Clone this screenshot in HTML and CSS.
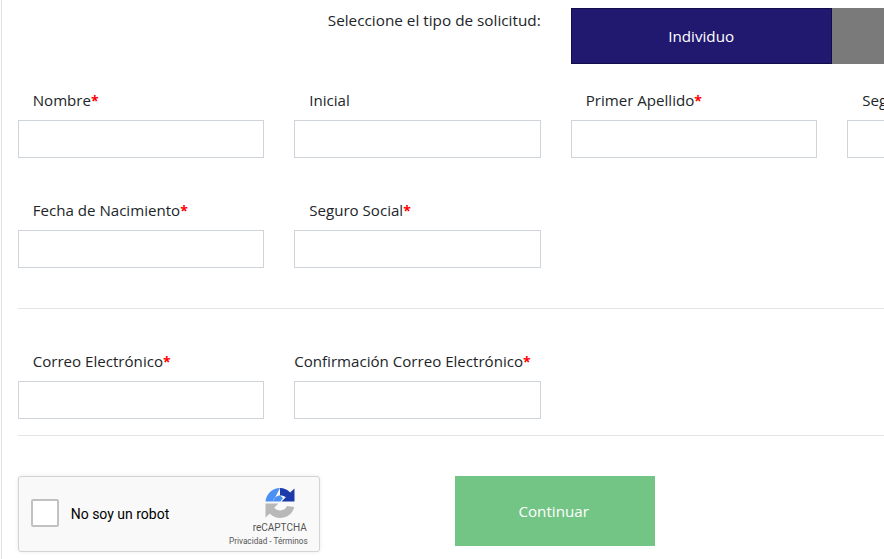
FILE: index.html
```html
<!DOCTYPE html>
<html lang="es">
<head>
  <meta charset="UTF-8" />
  <meta name="viewport" content="width=device-width, initial-scale=1.0"/>
  <title>Solicitud</title>
  <link rel="stylesheet" href="styles.css">
</head>
<body>
  <div class="form-container">
    <div class="type-row">
      <span class="type-label">Seleccione el tipo de solicitud:</span>
      <div class="type-buttons">
        <button class="type-btn active">Individuo</button>
        <button class="type-btn"></button>
      </div>
    </div>

    <div class="field-row first">
      <div class="field">
        <label>Nombre<span class="req">*</span></label>
        <input type="text">
      </div>
      <div class="field">
        <label>Inicial</label>
        <input type="text">
      </div>
      <div class="field">
        <label>Primer Apellido<span class="req">*</span></label>
        <input type="text">
      </div>
      <div class="field">
        <label>Segundo Apellido</label>
        <input type="text">
      </div>
    </div>

    <div class="field-row second">
      <div class="field">
        <label>Fecha de Nacimiento<span class="req">*</span></label>
        <input type="text">
      </div>
      <div class="field">
        <label>Seguro Social<span class="req">*</span></label>
        <input type="text">
      </div>
    </div>

    <hr class="divider">

    <div class="field-row third">
      <div class="field">
        <label>Correo Electrónico<span class="req">*</span></label>
        <input type="text">
      </div>
      <div class="field">
        <label class="flush">Confirmación Correo Electrónico<span class="req">*</span></label>
        <input type="text">
      </div>
    </div>

    <hr class="divider bottom">

    <div class="submit-row">
      <div class="captcha">
        <span class="captcha-check"></span>
        <span class="captcha-text">No soy un robot</span>
        <div class="captcha-brand">
          <svg class="captcha-logo" width="30" height="30" viewBox="0 0 30 30">
            <path fill="#1c3aa9" d="M15 0c4 0 7.600 1.700 10.100 4.500L29.500 .5V13.500H16.500l4.300-4.300C19.500 8.200 17.500 7.500 15 7.500z"/>
            <path fill="#4a90f5" d="M15 0C7.500 0 1.500 5.500 .5 13.500H8c.8-3.500 3.600-6 7-6l3 2.400-2.500 3.600H8z"/>
            <path fill="#b8b8b8" d="M.5 15.500H13.500l-4.300 4.200c1.300 1.700 3.400 2.800 5.800 2.800 3.300 0 5.900-1.900 7-4.500l7.300 1C27.500 25.800 21.800 30 15 30 11 30 7.400 28.300 4.900 25.500L.5 29.500z"/>
          </svg>
          <span class="captcha-name">reCAPTCHA</span>
          <span class="captcha-links">Privacidad - Términos</span>
        </div>
      </div>
      <button class="continue-btn">Continuar</button>
    </div>
  </div>
</body>
</html>
```

FILE: styles.css
```css
html, body {
  margin: 0;
  height: 100%;
  overflow: hidden;
  background-color: #ffffff;
}

body {
  font-family: "Open Sans", "Noto Sans", sans-serif;
  font-size: 15.1px;
  color: #212529;
}

.form-container {
  width: 1200px;
  height: 559px;
  box-sizing: border-box;
  margin-left: 1px;
  padding: 8px 0 0 15.7px;
  border-left: 1px solid #e0e0e0;
}

.type-row {
  display: flex;
  height: 56px;
}

.type-label {
  width: 523px;
  padding-top: 2px;
  text-align: right;
  line-height: 20px;
  font-size: 15.3px;
}

.type-buttons {
  display: flex;
  margin-left: 30px;
}

.type-btn {
  width: 261px;
  height: 56px;
  border: none;
  background-color: #7a7a7a;
  color: #ffffff;
  font-family: inherit;
  font-size: 15.2px;
  padding: 0;
}

.type-btn.active {
  background-color: #21186f;
  border: 1px solid #120d4a;
}

.field-row {
  display: grid;
  grid-template-columns: repeat(4, 246.5px);
  column-gap: 30px;
}

.field-row.first {
  margin-top: 26px;
}

.field-row.second {
  margin-top: 42px;
}

.field-row.third {
  margin-top: 42px;
}

.field label {
  display: block;
  height: 20px;
  line-height: 20px;
  margin-bottom: 10px;
  padding-left: 15px;
}

.field label.flush {
  padding-left: 0;
}

.req {
  color: #ff0000;
  font-weight: bold;
  font-size: 14px;
}

.field input {
  display: block;
  width: 100%;
  height: 38px;
  box-sizing: border-box;
  border: 1px solid #ced4da;
  background-color: #ffffff;
  padding: 6px 12px;
}

.divider {
  width: 866px;
  margin: 40px 0 0;
  border: none;
  border-top: 1px solid #e3e3e3;
}

.divider.bottom {
  margin-top: 16px;
}

.submit-row {
  display: flex;
  align-items: flex-start;
  margin-top: 40px;
}

.captcha {
  width: 302.5px;
  height: 76px;
  box-sizing: border-box;
  display: flex;
  align-items: center;
  padding: 0 11.5px 0 12px;
  background-color: #f9f9f9;
  border: 1px solid #d3d3d3;
  border-radius: 3px;
  box-shadow: 0 0 4px rgba(0, 0, 0, 0.08);
  font-family: Roboto, "Liberation Sans", sans-serif;
  color: #000000;
}

.captcha-check {
  width: 24px;
  height: 24px;
  margin-bottom: 2px;
  background-color: #ffffff;
  border: 2px solid #c1c1c1;
  border-radius: 2px;
}

.captcha-text {
  margin-left: 12px;
  font-size: 14px;
}

.captcha-brand {
  display: flex;
  flex-direction: column;
  align-items: flex-end;
  align-self: flex-start;
  margin-left: auto;
  padding-top: 11px;
  color: #555555;
}

.captcha-logo {
  margin-bottom: 4px;
  margin-right: 13px;
}

.captcha-name {
  font-size: 10px;
  line-height: 12px;
  margin-right: 1px;
}

.captcha-links {
  font-size: 8.2px;
  line-height: 10px;
  margin-top: 2px;
}

.continue-btn {
  width: 200px;
  height: 70px;
  margin-left: 134.5px;
  border: none;
  background-color: #72c585;
  color: #ffffff;
  font-family: inherit;
  font-size: 15.2px;
  font-weight: 500;
  padding: 0 2px 0 0;
}
```
